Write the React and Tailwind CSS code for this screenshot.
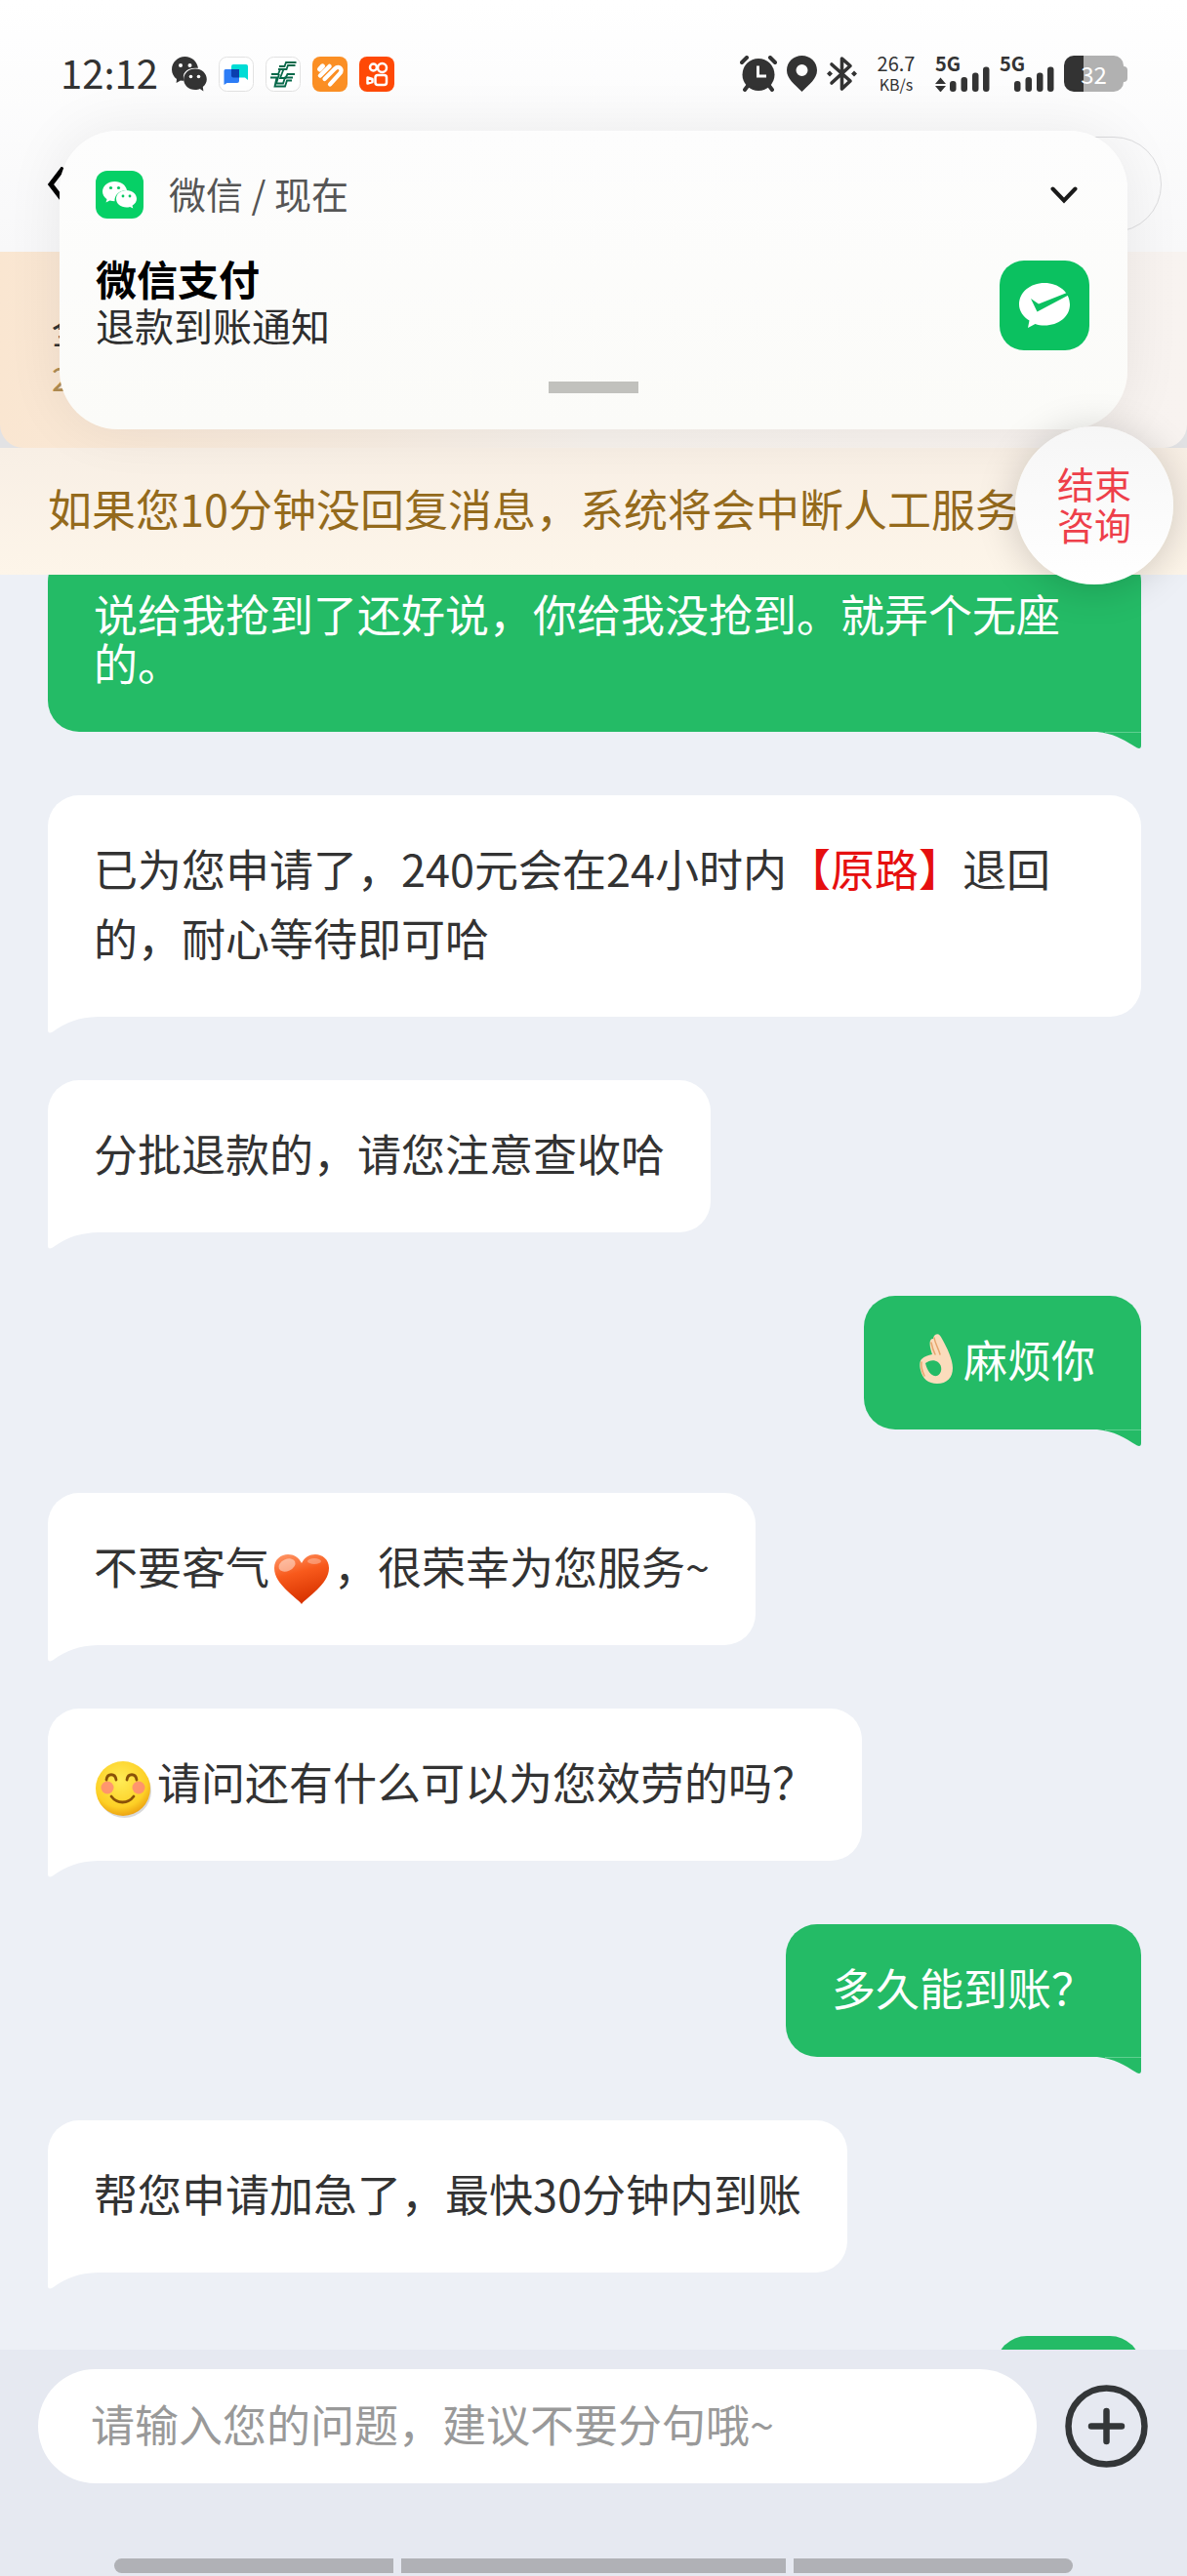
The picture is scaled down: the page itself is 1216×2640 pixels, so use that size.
import React, { useState } from 'react';
import clsx from 'clsx';

const WechatMark = ({ className }) => (
  <svg viewBox="0 0 36 36" className={className}>
    <path fill="#333" d="M13.500 0C6 0 0 6 0 13.200c0 4 2 7.600 5 9.800l-.4 4 4.400-2.600c1.500.3 2.900.4 3.800.2C9.500 17 15.500 10.500 27 11.800 25.800 5 20.500 0 13.500 0z" />
    <path fill="#333" d="M24 12.500c-6.700 0-11.800 4.700-11.800 10.800S17.300 34 24 34c1.800 0 3.500-.3 4.800-1l3.600 2.500-.6-4.400c2.500-2 4-4.800 4-7.800 0-6.100-5.100-10.800-11.800-10.800z" />
    <g fill="#fff">
      <circle cx="9" cy="9" r="2" />
      <circle cx="18.500" cy="9" r="2" />
      <circle cx="19.500" cy="20.500" r="1.800" />
      <circle cx="27.500" cy="20.500" r="1.800" />
    </g>
  </svg>
);

const MeetingApp = () => (
  <svg viewBox="0 0 36 36" className="size-9">
    <rect x="0.500" y="0.500" width="35" height="35" rx="8" fill="#fff" stroke="#e2e2e2" />
    <path d="M15 8h13a2 2 0 0 1 2 2v14l-3-2.500H15a2 2 0 0 1-2-2V10a2 2 0 0 1 2-2z" fill="#00dcd5" />
    <path d="M7 13h14v12a2 2 0 0 1-2 2H8.500L5.500 29V14.500A1.500 1.500 0 0 1 7 13z" fill="#2c7cf6" />
    <path d="M13 13h8v8.500h-6a2 2 0 0 1-2-2z" fill="#0a3fae" />
  </svg>
);

const PostApp = () => (
  <svg viewBox="0 0 36 36" className="size-9">
    <rect x="0.500" y="0.500" width="35" height="35" rx="8" fill="#fff" stroke="#e2e2e2" />
    <g fill="none" stroke="#07694a" strokeWidth="1.800">
      <path d="M31.500 6H21l-1.500 4H14" />
      <path d="M30.500 9H23l-1.500 4H13" />
      <path d="M15 13l-2 5H6M5 21.500h6.500L9.500 30.500H20l2-6h5" />
      <path d="M18.500 13l-3.500 9h5.500l2-4H30" />
      <path d="M14 18l-3 9.500h7l2-6h8" />
    </g>
  </svg>
);

const HeartApp = () => (
  <svg viewBox="0 0 36 36" className="size-9">
    <rect width="36" height="36" rx="8" fill="#fb8f24" />
    <g fill="none" stroke="#fff" strokeLinecap="round">
      <path d="M7.500 13l3-3.200" strokeWidth="5" />
      <path d="M8 19.500L17.500 10" strokeWidth="4.500" />
      <path d="M12.500 23L23 12.500c1.500-1.500 3.500-2.300 5.500-.8 2 2 1.200 4-.5 5.800L18 28.500" strokeWidth="4.200" />
    </g>
  </svg>
);

const VideoApp = () => (
  <svg viewBox="0 0 36 36" className="size-9">
    <rect width="36" height="36" rx="8" fill="#ff4906" />
    <g fill="none" stroke="#fff" strokeWidth="2.500">
      <circle cx="14.500" cy="11" r="3.500" />
      <circle cx="23.500" cy="11.500" r="4.500" />
      <rect x="16.500" y="19" width="11.500" height="10" rx="2.500" />
      <path d="M8.500 21.500v6l5-1.500v-3z" strokeLinejoin="round" />
    </g>
  </svg>
);

const AlarmIcon = () => (
  <svg viewBox="0 0 38 37" className="h-[37px] w-[38px]">
    <path d="M8 31l-3 4M30 31l3 4M2 7l5-5M36 7l-5-5" stroke="#333" strokeWidth="4" strokeLinecap="round" />
    <circle cx="19" cy="19.500" r="16.500" fill="#333" />
    <path d="M18.500 10.500v10.500h8.500" fill="none" stroke="#fff" strokeWidth="3" />
  </svg>
);

const PinIcon = () => (
  <svg viewBox="0 0 31 37" className="h-[37px] w-[31px]">
    <path fill="#333" fillRule="evenodd" d="M15.500 0C7 0 0 6.500 0 15c0 9 8 14 15.500 22C23 29 31 24 31 15 31 6.500 24 0 15.500 0zm0 9a6 6 0 1 1 0 12 6 6 0 0 1 0-12z" />
  </svg>
);

const BluetoothIcon = () => (
  <svg viewBox="0 0 31 37" className="h-[37px] w-[31px]">
    <path d="M5 9l19 17-8.500 8V3L24 10.500 5 28" fill="none" stroke="#333" strokeWidth="3.600" strokeLinejoin="round" strokeLinecap="round" />
    <path d="M3 15.500l3 3-3 3-3-3zM28 15.500l3 3-3 3-3-3z" fill="#333" />
  </svg>
);

const Signal = ({ arrows }) => (
  <div className="relative h-[37px] w-14">
    <span className="absolute top-0 left-0 text-[20px] leading-4 font-bold">5G</span>
    <svg viewBox="0 0 56 37" className="h-[37px] w-14">
      {arrows && <path d="M0 29l5.500-6.500L11 29zM0 31l5.500 6.500L11 31z" fill="#333" />}
      <g fill="#333">
        <rect x="15" y="26" width="6.500" height="11" rx="3" />
        <rect x="26.500" y="22" width="6.500" height="15" rx="3" />
        <rect x="38" y="17.500" width="6.500" height="19.500" rx="3" />
        <rect x="49" y="11.500" width="6.500" height="25.500" rx="3" />
      </g>
    </svg>
  </div>
);

const StatusBar = () => (
  <div className="flex h-[94px] items-end justify-between pr-[61px] pl-[62px] text-[#333]">
    <div className="flex items-center gap-3">
      <span className="w-[102px] pb-1 text-[40px] leading-8">12:12</span>
      <WechatMark className="size-9" />
      <MeetingApp />
      <PostApp />
      <HeartApp />
      <VideoApp />
    </div>
    <div className="flex items-center gap-[10px]">
      <AlarmIcon />
      <PinIcon />
      <BluetoothIcon />
      <div className="flex h-[37px] w-[60px] flex-col items-center justify-between">
        <span className="text-[20px] leading-4">26.7</span>
        <span className="text-[16px] leading-4">KB/s</span>
      </div>
      <Signal arrows />
      <Signal />
      <div className="flex items-center">
        <div className="flex h-[37px] w-[61px] items-center justify-center rounded-[10px] bg-[linear-gradient(90deg,#333_32%,#b1b1b1_32%)] text-[24px] leading-9 text-white">
          32
        </div>
        <div className="h-4 w-1 rounded-r bg-[#b1b1b1]" />
      </div>
    </div>
  </div>
);

const Notification = () => (
  <section className="absolute inset-x-[61px] top-[134px] z-20 flex flex-col rounded-[60px] bg-linear-to-b from-[#fdfdfd] to-[#fbfbf8] px-[37px] pt-[41px] pb-[37px] shadow-[0_0_60px_rgba(0,0,0,0.07)]">
    <div className="flex items-center">
      <svg viewBox="0 0 49 49" className="size-[49px]">
        <rect width="49" height="49" rx="12" fill="#06d066" />
        <path fill="#fff" d="M19.500 11C12.500 11 7 15.500 7 21.300c0 3.200 1.800 6 4.500 8l-1 3.200 4-2c1.500.5 3.500.8 5 .8C19 25 24.500 19.500 32 20c-1-5.200-6-9-12.500-9z" />
        <path fill="#fff" d="M31.500 20c-5.800 0-10.500 3.800-10.500 8.700s4.700 8.800 10.500 8.800c1.300 0 2.500-.2 3.600-.6l3.200 1.600-.8-2.800c2.800-1.800 4.500-4.200 4.500-7 0-4.900-4.700-8.700-10.500-8.700z" />
        <g fill="#06c862">
          <circle cx="15.500" cy="17.500" r="1.600" />
          <circle cx="23.500" cy="17.500" r="1.600" />
          <circle cx="28" cy="26" r="1.400" />
          <circle cx="35" cy="26" r="1.400" />
        </g>
      </svg>
      <span className="ml-[26px] flex-1 pb-1 text-[38px] leading-[45px] text-[#555]">微信 / 现在</span>
      <button type="button" aria-label="展开" className="mr-[14px]">
        <svg viewBox="0 0 28 18" className="h-[18px] w-7">
          <path d="M2.500 2.500L14 14.500l11.500-12" fill="none" stroke="#1a1a1a" strokeWidth="4" strokeLinecap="round" />
        </svg>
      </button>
    </div>
    <div className="mt-[37px] flex items-center justify-between pr-[2px]">
      <div className="pb-2">
        <h2 className="text-[42px] leading-[48px] font-bold text-black">微信支付</h2>
        <p className="text-[40px] leading-[48px] text-[#2e2e2e]">退款到账通知</p>
      </div>
      <svg viewBox="0 0 92 92" className="size-[92px]">
        <rect width="92" height="92" rx="25" fill="#0bc160" />
        <path d="M46 23c14.500 0 26 9.500 26 22S60.500 66.500 46 66.500c-3.500 0-6.500-.5-9.500-1.500l-7.500 4 1.500-7.500C24 57.500 20 51.500 20 45c0-12.500 11.500-22 26-22z" fill="#fff" />
        <path d="M32 39l8 5.500L69 33c1 .8 1.200 1.600 1.500 2.500L38.500 52.500z" fill="#0bc160" />
      </svg>
    </div>
    <div className="mt-[26px] h-3 w-[92px] self-center bg-[#c1c1bd]" />
  </section>
);

const HeartEmoji = () => (
  <svg viewBox="0 0 60 56" role="img" aria-label="爱心" className="-my-2 mx-[3px] mt-1 inline-block h-14 w-[60px] align-middle">
    <defs>
      <linearGradient id="heart" x1="0" y1="0" x2="0.300" y2="1">
        <stop offset="0" stopColor="#ff9a6b" />
        <stop offset="0.450" stopColor="#f85a1c" />
        <stop offset="1" stopColor="#d93400" />
      </linearGradient>
    </defs>
    <path d="M30 54C25 47 2 34 2 17 2 8 9 3 16 3c6 0 11 3 14 9 3-6 8-9 14-9 7 0 14 5 14 14 0 17-23 30-28 37z" fill="url(#heart)" />
    <ellipse cx="15" cy="14" rx="9" ry="6" fill="#fff" opacity="0.450" transform="rotate(-25 15 14)" />
    <ellipse cx="43" cy="10" rx="7" ry="3" fill="#fff" opacity="0.300" />
  </svg>
);

const SmileEmoji = () => (
  <svg viewBox="0 0 60 60" role="img" aria-label="微笑" className="-my-2 mr-[5px] inline-block size-[60px] align-middle">
    <defs>
      <radialGradient id="face" cx="0.450" cy="0.350" r="0.700">
        <stop offset="0" stopColor="#ffec57" />
        <stop offset="0.700" stopColor="#fdd026" />
        <stop offset="1" stopColor="#e8960c" />
      </radialGradient>
    </defs>
    <circle cx="31.500" cy="32.500" r="27.500" fill="#000" opacity="0.150" />
    <circle cx="30" cy="30" r="28" fill="url(#face)" />
    <circle cx="14" cy="29" r="6.500" fill="#ff7f7f" opacity="0.750" />
    <circle cx="46" cy="29" r="6.500" fill="#ff7f7f" opacity="0.750" />
    <g fill="none" stroke="#8a5208" strokeWidth="2.800" strokeLinecap="round">
      <path d="M13 21c1-7 9-7 10 0M34 21c1-7 9-7 10 0" />
      <path d="M18 38c6 8 17 8 23 0" />
    </g>
  </svg>
);

const OkEmoji = () => (
  <svg viewBox="0 0 55 54" role="img" aria-label="好的" className="-mt-4 inline-block h-[54px] w-[55px] align-middle">
    <path
      fill="#fbdcbc"
      fillRule="evenodd"
      d="M26 3c3-2 5 0 7 4 5 9 11 21 11 30 0 10-6 16-16 16-9 0-15-5-17-14-1-4-1-9 1-11 3-3 7-4 11-5-2-6-3-11-2-14 1-2 2-2 3-2 0-2 1-3 2-4zM16 32c2 9 7 14 12 13 5-2 6-10 1-14-4-3-9-2-13 1z"
    />
    <path d="M25 6c1 6 4 10 6 17M22 11c1 5 2 8 4 12M12 31c-1 6 1 10 3 14" fill="none" stroke="#e5a56c" strokeWidth="1.500" strokeLinecap="round" />
  </svg>
);

const messages = [
  { id: 1, mine: true, wide: true, body: '说给我抢到了还好说\uff0c你给我没抢到。就弄个无座的。' },
  {
    id: 2,
    wide: true,
    body: (
      <>
        {'已为您申请了\uff0c240元会在24小时内'}
        <span className="text-[#e60f0f]">【原路】</span>退回
        <br />
        {'的\uff0c耐心等待即可哈'}
      </>
    ),
  },
  { id: 3, body: '分批退款的\uff0c请您注意查收哈' },
  { id: 4, mine: true, body: <><OkEmoji />麻烦你</> },
  { id: 5, body: <>不要客气<HeartEmoji />{'\uff0c很荣幸为您服务~'}</> },
  { id: 6, body: <><SmileEmoji />{'请问还有什么可以为您效劳的吗\uff1f'}</> },
  { id: 7, mine: true, body: '多久能到账\uff1f' },
  { id: 8, body: '帮您申请加急了\uff0c最快30分钟内到账' },
  { id: 9, mine: true, body: <OkEmoji /> },
];

const Bubble = ({ mine, wide, children }) => (
  <div
    className={clsx(
      'relative max-w-full rounded-t-[32px] px-[47px] text-[45px]',
      wide && 'w-full',
      mine
        ? 'self-end rounded-bl-[32px] bg-[#24bb66] pt-10 pb-[46px] leading-[50px] text-white'
        : 'self-start rounded-br-[32px] bg-white pt-[39px] pb-[46px] leading-[71px] text-[#333]'
    )}
  >
    {children}
    {mine ? (
      <svg viewBox="0 0 45 17" className="absolute top-full right-0 h-[17px] w-[45px]">
        <path d="M0 0h45v14q0 4-4 2.500C27 8 18 2 0 0z" fill="#24bb66" />
        <path d="M8 0.500h37" stroke="#5fcf90" strokeWidth="1" />
      </svg>
    ) : (
      <svg viewBox="0 0 51 17" className="absolute top-full left-0 h-[17px] w-[51px]">
        <path d="M51 0H0v14q0 4 5 1.500C20 5 31 1 51 0z" fill="#fff" />
      </svg>
    )}
  </div>
);

const App = () => {
  const [text, setText] = useState('');

  return (
    <div className="flex h-screen flex-col overflow-hidden bg-[#edf0f6] font-['Noto_Sans_CJK_SC',sans-serif]">
      {/* Header, partly under the notification */}
      <header className="relative z-10">
        <div className="bg-linear-to-b from-white to-[#f8f8f9] pb-5">
          <StatusBar />
          <div className="mt-[46px] flex items-center justify-between pr-[26px] pl-[48px]">
            <button type="button" aria-label="返回">
              <svg viewBox="0 0 24 36" className="h-9 w-6">
                <path d="M17 1L4 18l13 17" fill="none" stroke="#000" strokeWidth="5" />
              </svg>
            </button>
            <div className="h-[98px] w-[220px] rounded-full border border-[#dcdcde]" />
          </div>
        </div>

        <div className="bg-[#e2e2e4]">
          <div className="h-[201px] rounded-b-[24px] bg-linear-to-r from-[#fae6d1] via-[#f6f1ec] to-[#f8f3f0] px-[53px] pt-[54px]">
            <p className="text-[36px] leading-[50px] text-[#333]">全</p>
            <p className="text-[34px] leading-[50px] text-[#b08c52]">2</p>
          </div>
        </div>

        <div className="bg-linear-to-b from-[#f8efe5] to-[#fdf5e9] px-[49px] pt-[30px] pb-9">
          <p className="text-[45px] leading-16 whitespace-nowrap text-[#946a1c]">
            {'如果您10分钟没回复消息\uff0c系统将会中断人工服务'}
          </p>
        </div>

        <Notification />

        <button
          type="button"
          className="absolute right-[14px] bottom-[-10px] z-30 size-[162px] rounded-full bg-linear-to-b from-[#f6f6f6] to-white px-[42px] pb-1 text-[38px] leading-[42px] text-[#ee3f4a] shadow-[0_4px_40px_rgba(0,0,0,0.18)]"
        >
          结束咨询
        </button>
      </header>

      {/* Messages */}
      <main className="min-h-0 flex-1 overflow-hidden pr-[47px] pl-[49px]">
        <div className="-mt-[25px] flex flex-col gap-[65px]">
          {messages.map((m) => (
            <Bubble key={m.id} mine={m.mine} wide={m.wide}>
              {m.body}
            </Bubble>
          ))}
        </div>
      </main>

      {/* Input bar */}
      <footer className="bg-[#e6e9f1] pt-5 pb-[3px]">
        <div className="flex items-center gap-[29px] pr-10 pl-[39px]">
          <input
            type="text"
            aria-label="输入问题"
            placeholder={'请输入您的问题\uff0c建议不要分句哦~'}
            value={text}
            onChange={(e) => setText(e.target.value)}
            className="h-[117px] min-w-0 flex-1 rounded-full bg-white px-[54px] pb-[6px] text-[45px] text-[#333] outline-none placeholder:text-[#999]"
          />
          <button type="button" aria-label="更多">
            <svg viewBox="0 0 85 85" className="size-[85px]">
              <circle cx="42.500" cy="42.500" r="39" fill="none" stroke="#333638" strokeWidth="6.500" />
              <path d="M42.500 27v31M27 42.500h31" stroke="#333638" strokeWidth="6.500" strokeLinecap="round" />
            </svg>
          </button>
        </div>
        <div className="mt-[77px] flex gap-2 px-[117px]">
          <div className="h-[15px] flex-[286] rounded-l-full bg-[#b0b1b6]" />
          <div className="h-[15px] flex-[394] bg-[#b0b1b6]" />
          <div className="h-[15px] flex-[286] rounded-r-full bg-[#b0b1b6]" />
        </div>
      </footer>
    </div>
  );
};

export default App;
